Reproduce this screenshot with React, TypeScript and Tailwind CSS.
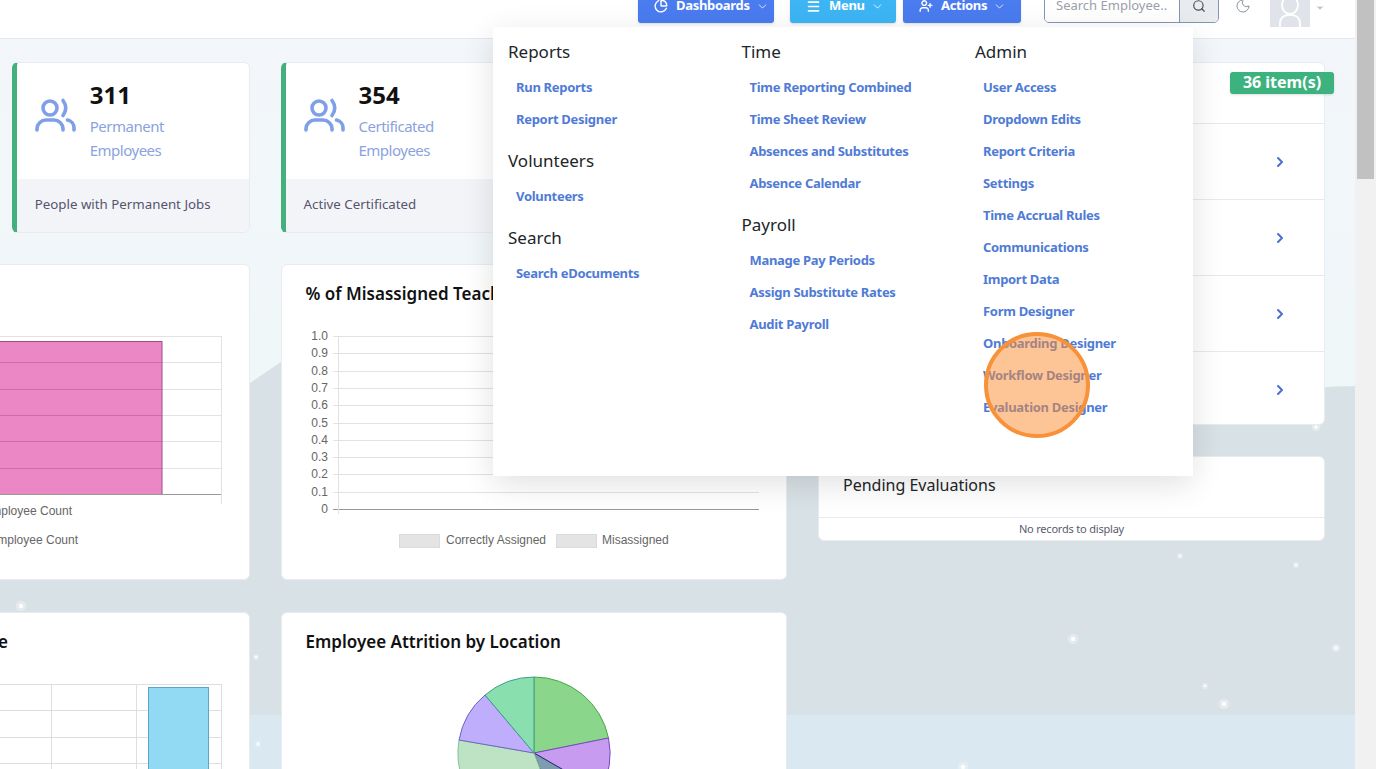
import { ChartPie, ChevronDown, ChevronRight, Menu, Moon, Search, UserPlus } from 'lucide-react';

const reports = [
  { title: 'Reports', links: ['Run Reports', 'Report Designer'] },
  { title: 'Volunteers', links: ['Volunteers'] },
  { title: 'Search', links: ['Search eDocuments'] },
];
const time = [
  { title: 'Time', links: ['Time Reporting Combined', 'Time Sheet Review', 'Absences and Substitutes', 'Absence Calendar'] },
  { title: 'Payroll', links: ['Manage Pay Periods', 'Assign Substitute Rates', 'Audit Payroll'] },
];
const admin = [
  {
    title: 'Admin',
    links: [
      'User Access',
      'Dropdown Edits',
      'Report Criteria',
      'Settings',
      'Time Accrual Rules',
      'Communications',
      'Import Data',
      'Form Designer',
      'Onboarding Designer',
      'Workflow Designer',
      'Evaluation Designer',
    ],
  },
];

function MenuColumn({ groups }: { groups: { title: string; links: string[] }[] }) {
  return (
    <div className="flex flex-col">
      {groups.map((group, i) => (
        <div key={group.title} className={i > 0 ? 'mt-[13px]' : ''}>
          <p className="h-[26px] mb-[6px] text-[17px] leading-[26px] text-[#212529]">{group.title}</p>
          {group.links.map((link) => (
            <p key={link} className="h-[32px] pl-[8px] pt-[2px] flex items-center text-[13px] tracking-[-0.3px] font-bold text-[#4f7bd6] whitespace-nowrap">
              {link}
            </p>
          ))}
        </div>
      ))}
    </div>
  );
}

function HeaderButton({ label, color, width, icon }: { label: string; color: string; width: string; icon: React.ReactNode }) {
  return (
    <div className={`${color} ${width} h-[34px] -mt-[11px] pl-[16px] rounded-[3px] flex items-center gap-[8px] text-white text-[13px] tracking-[-0.3px] font-bold shadow-sm`}>
      {icon}
      <span>{label}</span>
      <ChevronDown size={13} strokeWidth={1.5} className="-ml-[2px]" />
    </div>
  );
}

function PeopleIcon() {
  return (
    <svg width="42" height="36" viewBox="0 0 42 36" fill="none" stroke="#7f9fe8" strokeWidth="3.6" strokeLinecap="round" className="mt-[16px] shrink-0">
      <circle cx="16" cy="11" r="7" />
      <path d="M29 3.5 Q34.5 11 29 18.5" />
      <path d="M3 33 V31.5 a9 9 0 0 1 9 -8.5 h8 a9 9 0 0 1 9 8.5 V33" />
      <path d="M33.5 23 a8 8 0 0 1 6.5 8 v2" />
    </svg>
  );
}

function AvatarIcon() {
  return (
    <svg width="40" height="27" viewBox="0 0 40 27" fill="none" stroke="#fff" strokeWidth="1.8" className="block">
      <ellipse cx="20" cy="5" rx="8" ry="9" />
      <path d="M10 27 v-4 a8 8 0 0 1 8 -8 h4 a8 8 0 0 1 8 8 v4" />
    </svg>
  );
}

function StatCard({ value, label, footer }: { value: string; label: string[]; footer: string }) {
  return (
    <div className="h-[171px] rounded-[6px] border border-[#e8ecf1] border-l-[5px] border-l-[#45b07e] bg-white overflow-hidden flex flex-col">
      <div className="h-[116px] flex pl-[17px] pt-[18px]">
        <PeopleIcon />
        <div className="ml-[14px]">
          <p className="text-[24px] leading-[28px] font-bold text-[#111]">{value}</p>
          <div className="mt-[5px] text-[15px] tracking-[-0.5px] leading-[24px] text-[#8aa3e0]">
            {label.map((line) => (
              <p key={line}>{line}</p>
            ))}
          </div>
        </div>
      </div>
      <div className="flex-1 bg-[#f3f4f8] pl-[18px] pb-[2px] flex items-center text-[13.3px] text-[#55556e]">{footer}</div>
    </div>
  );
}

function BarChart() {
  const lines = [336, 362, 389, 415, 441, 468];
  return (
    <svg width="506" height="316" viewBox="-257 264 506 316" className="block">
      {lines.map((y) => (
        <line key={y} x1="-230" x2="221" y1={y + 0.5} y2={y + 0.5} stroke="#e2e2e2" />
      ))}
      <line x1="221.5" x2="221.5" y1="336" y2="504" stroke="#e2e2e2" />
      <rect x="-200" y="341.5" width="362" height="153" fill="#e86cb8" fillOpacity="0.82" stroke="#a3488a" />
      {lines.slice(1).map((y) => (
        <line key={y} x1="-200" x2="162" y1={y + 0.5} y2={y + 0.5} stroke="#b04f92" strokeOpacity="0.45" />
      ))}
      <line x1="-230" x2="221" y1="494.5" y2="494.5" stroke="#999" />
      <text x="72" y="515" textAnchor="end" fontFamily="Liberation Sans" fontSize="12" fill="#666">Employee Count</text>
      <text x="78" y="544" textAnchor="end" fontFamily="Liberation Sans" fontSize="12" fill="#666">Employee Count</text>
    </svg>
  );
}

function MisassignedChart() {
  const ticks = ['1.0', '0.9', '0.8', '0.7', '0.6', '0.5', '0.4', '0.3', '0.2', '0.1', '0'];
  return (
    <svg width="506" height="260" viewBox="281 320 506 260" className="block">
      {ticks.map((tick, i) => {
        const y = Math.round(336 + i * 17.3) + 0.5;
        return (
          <g key={tick}>
            <line x1="333" x2="759" y1={y} y2={y} stroke={tick === '0' ? '#999' : '#e2e2e2'} />
            <text x="328" y={y + 3.5} textAnchor="end" fontFamily="Liberation Sans" fontSize="12" fill="#666">{tick}</text>
          </g>
        );
      })}
      <line x1="338.5" x2="338.5" y1="336" y2="514" stroke="#e2e2e2" />
      <rect x="399.5" y="534.5" width="40" height="13" fill="#e4e4e4" stroke="#dadada" />
      <text x="446" y="544" fontFamily="Liberation Sans" fontSize="12" fill="#666">Correctly Assigned</text>
      <rect x="556.5" y="534.5" width="40" height="13" fill="#e4e4e4" stroke="#dadada" />
      <text x="602" y="544" fontFamily="Liberation Sans" fontSize="12" fill="#666">Misassigned</text>
    </svg>
  );
}

function ColumnChart() {
  return (
    <svg width="506" height="100" viewBox="-257 684 506 100" className="block">
      {[684, 710, 737, 763].map((y) => (
        <line key={y} x1="-230" x2="221" y1={y + 0.5} y2={y + 0.5} stroke="#dedede" />
      ))}
      {[-34, 51, 136, 221].map((x) => (
        <line key={x} x1={x + 0.5} x2={x + 0.5} y1="684" y2="784" stroke="#dedede" />
      ))}
      <rect x="148.5" y="687.5" width="60" height="120" fill="#92d9f4" stroke="#55a9c4" />
    </svg>
  );
}

function PieChart() {
  return (
    <svg width="160" height="160" viewBox="454 673 160 160" className="block mx-auto">
      <path d="M534 753 L534 677 A76 76 0 0 1 608.5 738 Z" fill="#8ad68a" stroke="#4aa84a" />
      <path d="M534 753 L608.5 738 A76 76 0 0 1 600 791 Z" fill="#c79cf0" stroke="#7a48c0" />
      <path d="M534 753 L600 791 A76 76 0 0 1 561 824 Z" fill="#7f9bb0" stroke="#1f2f70" />
      <path d="M534 753 L561 824 A76 76 0 0 1 459 740 Z" fill="#bde3c4" stroke="#88c09a" />
      <path d="M534 753 L459 740 A76 76 0 0 1 485 695 Z" fill="#bfaefc" stroke="#6a66c0" />
      <path d="M534 753 L485 695 A76 76 0 0 1 534 677 Z" fill="#8adfae" stroke="#3f9f90" />
    </svg>
  );
}

function Backdrop() {
  const stars = [
    [1073, 639, 2.2], [1224, 704, 2.2], [1205, 686, 1.3], [1336, 648, 1.8], [1180, 556, 1.3], [1296, 565, 1.3],
    [963, 767, 2.2], [1316, 427, 1.8], [21, 606, 2.2], [256, 657, 1.3], [258, 744, 1.3],
  ];
  return (
    <svg width="1355" height="769" viewBox="0 0 1355 769" className="absolute left-0 top-0">
      <path d="M0 400 L250 383 L281 362 L600 320 L1200 405 Q1290 386 1355 386 L1355 769 L0 769 Z" fill="#d8e1e5" />
      <rect x="0" y="715" width="1355" height="54" fill="#d9e8f1" />
      {stars.map(([x, y, r]) => (
        <g key={`${x}-${y}`}>
          <circle cx={x} cy={y} r={r * 2.4} fill="#fff" fillOpacity="0.3" />
          <circle cx={x} cy={y} r={r} fill="#fff" fillOpacity="0.95" />
        </g>
      ))}
    </svg>
  );
}

export default function App() {
  return (
    <div className="w-[1376px] h-[769px] flex overflow-hidden font-['Noto_Sans',sans-serif] text-[#212529]">
      <div className="relative w-[1355px] h-full overflow-hidden bg-[linear-gradient(180deg,#f3f6fa_0%,#f0f7f9_45%,#eaf4f8_100%)]">
        <Backdrop />

        <header className="relative h-[39px] bg-white border-b border-[#e3e8ee] flex items-start pl-[638px]">
          <HeaderButton label="Dashboards" color="bg-[#4a7cf0]" width="w-[136px]" icon={<ChartPie size={14} strokeWidth={2.4} />} />
          <div className="ml-[16px]">
            <HeaderButton label="Menu" color="bg-[#3db5f5]" width="w-[106px]" icon={<Menu size={15} strokeWidth={2.6} />} />
          </div>
          <div className="ml-[7px]">
            <HeaderButton label="Actions" color="bg-[#4a7cf0]" width="w-[118px]" icon={<UserPlus size={14} strokeWidth={2.4} />} />
          </div>
          <div className="ml-[23px] w-[175px] h-[34px] -mt-[11px] flex border border-[#8296b8] rounded-[5px] overflow-hidden">
            <div className="flex-1 pl-[11px] flex items-center text-[13px] text-[#9aa0ac] bg-white whitespace-nowrap">Search Employee..</div>
            <div className="w-[39px] bg-[#e9ecef] border-l border-[#8296b8] flex items-center justify-center text-[#4a4f57]">
              <Search size={14} />
            </div>
          </div>
          <Moon size={16} strokeWidth={1.5} className="ml-[16px] -mt-[2px] text-[#8b93a0]" />
          <div className="ml-[19px] w-[40px] h-[27px] bg-[#e0e4ea] overflow-hidden">
            <AvatarIcon />
          </div>
          <ChevronDown size={10} fill="#b8bdc6" stroke="#b8bdc6" className="ml-[5px] mt-[3px]" />
        </header>

        <main className="relative -ml-[257px] pt-[23px] flex gap-[31px] w-[1582px]">
          <div className="w-[1044px] shrink-0 flex flex-col gap-[31px]">
            <div className="grid grid-cols-4 gap-[31px]">
              <div className="h-[171px] rounded-[6px] bg-white border border-[#e8ecf1]" />
              <StatCard value="311" label={['Permanent', 'Employees']} footer="People with Permanent Jobs" />
              <StatCard value="354" label={['Certificated', 'Employees']} footer="Active Certificated" />
              <div className="h-[171px] rounded-[6px] bg-white border border-[#e8ecf1]" />
            </div>
            <div className="grid grid-cols-2 gap-[31px]">
              <div className="h-[316px] rounded-[6px] bg-white border border-[#e8ecf1] overflow-hidden">
                <div className="-m-px">
                  <BarChart />
                </div>
              </div>
              <div className="h-[316px] rounded-[6px] bg-white border border-[#e8ecf1] overflow-hidden">
                <div className="-m-px">
                  <h3 className="h-[56px] pl-[25px] pt-[16px] text-[17px] leading-[28px] font-semibold text-[#111]">% of Misassigned Teachers</h3>
                  <MisassignedChart />
                </div>
              </div>
            </div>
            <div className="grid grid-cols-2 gap-[31px] mt-[1px]">
              <div className="h-[300px] rounded-[6px] bg-white border border-[#e8ecf1] overflow-hidden">
                <div className="-m-px">
                  <h3 className="h-[72px] w-[265px] pt-[16px] whitespace-nowrap text-[17px] leading-[28px] font-semibold text-[#111] flex justify-end">Employee Attrition by Age</h3>
                  <ColumnChart />
                </div>
              </div>
              <div className="h-[300px] rounded-[6px] bg-white border border-[#e8ecf1] overflow-hidden">
                <div className="-m-px">
                  <h3 className="h-[61px] pl-[25px] pt-[16px] text-[17px] leading-[28px] font-semibold text-[#111]">Employee Attrition by Location</h3>
                  <PieChart />
                </div>
              </div>
            </div>
          </div>

          <div className="w-[507px] shrink-0 flex flex-col gap-[31px]">
            <div className="relative h-[363px] rounded-[6px] bg-white border border-[#e8ecf1] flex flex-col">
              <div className="absolute -right-[10px] top-[9px] w-[104px] h-[22px] pb-[2px] rounded-[3px] bg-[#3cb37f] text-white text-[16px] font-bold flex items-center justify-center shadow-sm">
                36 item(s)
              </div>
              <div className="h-[61px] border-b border-[#e6e9ef] shrink-0" />
              {[0, 1, 2].map((row) => (
                <div key={row} className="h-[76px] shrink-0 flex items-center justify-end pr-[36px] border-b border-[#e6e9ef]">
                  <ChevronRight size={16} strokeWidth={3} className="text-[#4a6fd0]" />
                </div>
              ))}
              <div className="flex-1 pt-[3px] flex items-center justify-end pr-[36px]">
                <ChevronRight size={16} strokeWidth={3} className="text-[#4a6fd0]" />
              </div>
            </div>
            <div className="h-[85px] rounded-[6px] bg-white border border-[#e8ecf1] flex flex-col">
              <div className="h-[61px] border-b border-[#e6e9ef] pl-[24px] pt-[14px] text-[16px] leading-[28px] text-[#212529]">Pending Evaluations</div>
              <div className="flex-1 flex items-center justify-center text-[11px] tracking-[-0.2px] text-[#5a5a70]">No records to display</div>
            </div>
          </div>
        </main>

        <div className="absolute left-[493px] top-[27px] w-[700px] h-[449px] bg-white shadow-[0_8px_30px_rgba(0,0,0,0.12)] grid grid-cols-[233.5px_233.5px_1fr] pl-[15px] pt-[12px]">
          <MenuColumn groups={reports} />
          <MenuColumn groups={time} />
          <MenuColumn groups={admin} />
        </div>

        <div className="absolute left-[984px] top-[332px] w-[106px] h-[106px] rounded-full bg-[#fb8b2e]/50 border-[4px] border-[#f7913a]" />
      </div>

      <div className="w-[21px] h-full bg-[#f1f1f1] px-[2px]">
        <div className="h-[179px] bg-[#c1c1c1]" />
      </div>
    </div>
  );
}
